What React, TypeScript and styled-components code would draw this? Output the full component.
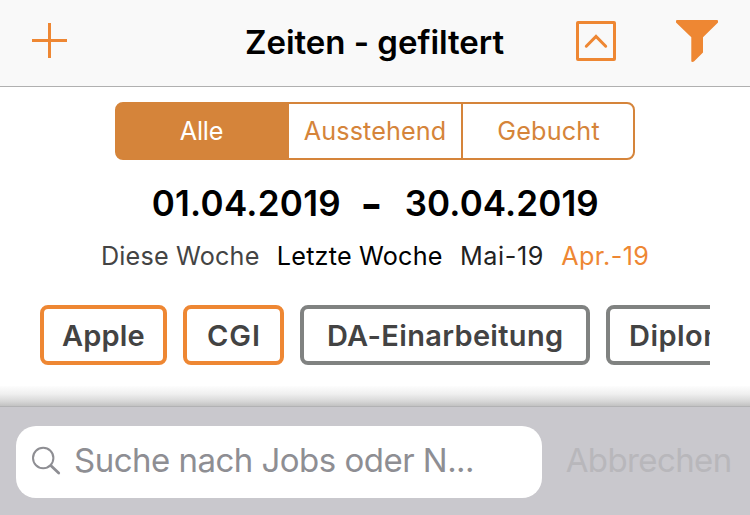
import React from "react";
import styled, { createGlobalStyle } from "styled-components";

const ORANGE = "#ee8733";
const SEGMENT_ORANGE = "#d5843a";

const GlobalStyle = createGlobalStyle`
  *, *::before, *::after { box-sizing: border-box; }
  body {
    margin: 0;
    background: #fff;
    font-family: Inter, "Liberation Sans", sans-serif;
    color: #000;
  }
`;

const Screen = styled.div`
  width: 750px;
  height: 515px;
  display: flex;
  flex-direction: column;
  overflow: hidden;
  white-space: nowrap;
`;

const Header = styled.header`
  display: grid;
  grid-template-columns: 245px 1fr auto;
  height: 87px;
  flex: none;
  background: #f9f9f9;
  border-bottom: 1px solid #b0b0b0;
`;

const HeaderActions = styled.div`
  display: flex;
  gap: 60px;
  padding: 20px 32px 0 0;
`;

const IconButton = styled.button<{ $left?: number; $top?: number }>`
  display: block;
  border: 0;
  background: none;
  padding: 0;
  margin: ${(p) => p.$top ?? 0}px 0 0 ${(p) => p.$left ?? 0}px;
  justify-self: start;
  align-self: start;
  svg { display: block; }
`;

const Title = styled.h1`
  margin: 0;
  font-size: 33px;
  font-weight: 600;
  line-height: 84px;
  letter-spacing: -0.04px;
`;

const Segments = styled.div`
  display: grid;
  grid-template-columns: 172px 174px 1fr;
  width: 520px;
  height: 58px;
  flex: none;
  margin: 15px 0 0 115px;
  border: 2px solid ${SEGMENT_ORANGE};
  border-radius: 8px;
  background: linear-gradient(90deg, ${SEGMENT_ORANGE} 172px, #fff 172px);
`;

const Segment = styled.button<{ $active?: boolean; $spacing: number }>`
  border: 0;
  border-right: 2px solid ${SEGMENT_ORANGE};
  padding: 0;
  font: 400 25.2px/54px Inter, "Liberation Sans", sans-serif;
  letter-spacing: ${(p) => p.$spacing}px;
  text-align: center;
  color: ${(p) => (p.$active ? "#fff" : SEGMENT_ORANGE)};
  background: transparent;
  &:first-child { border-right: 0; padding-right: 3px; }
  &:last-child { border-right: 0; padding-left: 1px; }
`;

const DateRange = styled.div`
  display: flex;
  align-items: center;
  height: 44px;
  flex: none;
  margin-top: 21px;
  padding-left: 151.7px;
  font-size: 35px;
  font-weight: 600;
  line-height: 43px;
`;

const DateValue = styled.span<{ $spacing: number }>`
  letter-spacing: ${(p) => p.$spacing}px;
`;

const DateDash = styled.span`
  width: 63.8px;
  padding-right: 3px;
  text-align: center;
  font-size: 48px;
`;

const QuickRanges = styled.nav`
  display: flex;
  gap: 17.3px;
  height: 40px;
  flex: none;
  margin-top: 11px;
  padding-left: 101px;
  font-size: 25.2px;
  line-height: 40px;
`;

const QuickRange = styled.span<{ $color: string; $spacing: number }>`
  color: ${(p) => p.$color};
  letter-spacing: ${(p) => p.$spacing}px;
`;

const Chips = styled.div`
  display: flex;
  gap: 16px;
  height: 60px;
  flex: none;
  margin: 29px 40px 0;
  overflow: hidden;
`;

const Chip = styled.button<{ $width: number; $selected?: boolean; $spacing: number; $pad: number }>`
  flex: none;
  width: ${(p) => p.$width}px;
  border: 4px solid ${(p) => (p.$selected ? ORANGE : "#808281")};
  border-radius: 8px;
  padding: 1px 0 0 ${(p) => p.$pad}px;
  background: #fff;
  color: #434343;
  font: 600 29px/51px Inter, "Liberation Sans", sans-serif;
  letter-spacing: ${(p) => p.$spacing}px;
  text-align: left;
`;

const Shade = styled.div`
  height: 20px;
  flex: none;
  margin-top: 21px;
  background: linear-gradient(#fdfdfd, #efefef 40%, #d8d8d8 75%, #c2c2c2);
`;

const SearchBar = styled.footer`
  display: flex;
  align-items: flex-start;
  height: 109px;
  flex: none;
  padding: 19px 0 0 16px;
  border-top: 1px solid #b2b2b4;
  background: #c9c8cd;
`;

const SearchField = styled.div`
  display: flex;
  align-items: flex-start;
  width: 526px;
  height: 72px;
  padding-left: 15px;
  border-radius: 20px;
  background: #fff;
  color: #8e8e93;
  svg { margin: 19px 12px 0 0; flex: none; }
`;

const Placeholder = styled.span`
  font-size: 33px;
  line-height: 68px;
  letter-spacing: -0.52px;
`;

const Cancel = styled.button`
  border: 0;
  background: none;
  padding: 0;
  margin-left: 23.7px;
  color: #b8b7bb;
  font: 400 33px/68px Inter, "Liberation Sans", sans-serif;
  letter-spacing: -0.61px;
`;

const PlusIcon = () => (
  <svg width="35" height="35" viewBox="0 0 35 35" fill={ORANGE}>
    <path d="M16 0h3v16h16v3H19v16h-3V19H0v-3h16z" />
  </svg>
);

const CollapseIcon = () => (
  <svg width="40" height="40" viewBox="0 0 40 40" fill="none" stroke={ORANGE} strokeWidth="3">
    <rect x="1.5" y="1.5" width="37" height="37" rx="0.5" />
    <path d="M10.3 25.2L20 15.4l9.7 9.8" strokeLinecap="round" />
  </svg>
);

const FilterIcon = () => (
  <svg width="42" height="42" viewBox="0 0 42 42" fill={ORANGE}>
    <path d="M1 0h40q1 0 1 1v1.5L27 17.3v15.2L18.2 41.3q-.8.7-1.9.7-1 0-1-1V17.3L0 2.5V1q0-1 1-1z" />
  </svg>
);

const SearchIcon = () => (
  <svg width="31" height="30" viewBox="0 0 31 30" fill="none" stroke="#8e8e93" strokeLinecap="round">
    <circle cx="12.2" cy="13" r="10.2" strokeWidth="2" />
    <path d="M20 20.8l7.7 7.2" strokeWidth="2.8" />
  </svg>
);

export default function App() {
  return (
    <Screen>
      <GlobalStyle />
      <Header>
        <IconButton $left={32} $top={23} aria-label="Hinzufügen"><PlusIcon /></IconButton>
        <Title>Zeiten - gefiltert</Title>
        <HeaderActions>
          <IconButton $top={1} aria-label="Einklappen"><CollapseIcon /></IconButton>
          <IconButton aria-label="Filter"><FilterIcon /></IconButton>
        </HeaderActions>
      </Header>

      <Segments>
        <Segment $active $spacing={-0.15}>Alle</Segment>
        <Segment $spacing={0.11}>Ausstehend</Segment>
        <Segment $spacing={0.2}>Gebucht</Segment>
      </Segments>

      <DateRange>
        <DateValue $spacing={0.27}>01.04.2019</DateValue>
        <DateDash>-</DateDash>
        <DateValue $spacing={0.11}>30.04.2019</DateValue>
      </DateRange>

      <QuickRanges>
        <QuickRange $color="#444" $spacing={0.17}>Diese Woche</QuickRange>
        <QuickRange $color="#000" $spacing={0.2}>Letzte Woche</QuickRange>
        <QuickRange $color="#222" $spacing={0.59}>Mai-19</QuickRange>
        <QuickRange $color={ORANGE} $spacing={0.37}>Apr.-19</QuickRange>
      </QuickRanges>

      <Chips>
        <Chip $width={127} $pad={18} $spacing={0.15} $selected>Apple</Chip>
        <Chip $width={101} $pad={20} $spacing={0.9} $selected>CGI</Chip>
        <Chip $width={290} $pad={23} $spacing={0.32}>DA-Einarbeitung</Chip>
        <Chip $width={230} $pad={19} $spacing={0.45}>Diplomarbeit</Chip>
      </Chips>

      <Shade />
      <SearchBar>
        <SearchField>
          <SearchIcon />
          <Placeholder>Suche nach Jobs oder N...</Placeholder>
        </SearchField>
        <Cancel>Abbrechen</Cancel>
      </SearchBar>
    </Screen>
  );
}
